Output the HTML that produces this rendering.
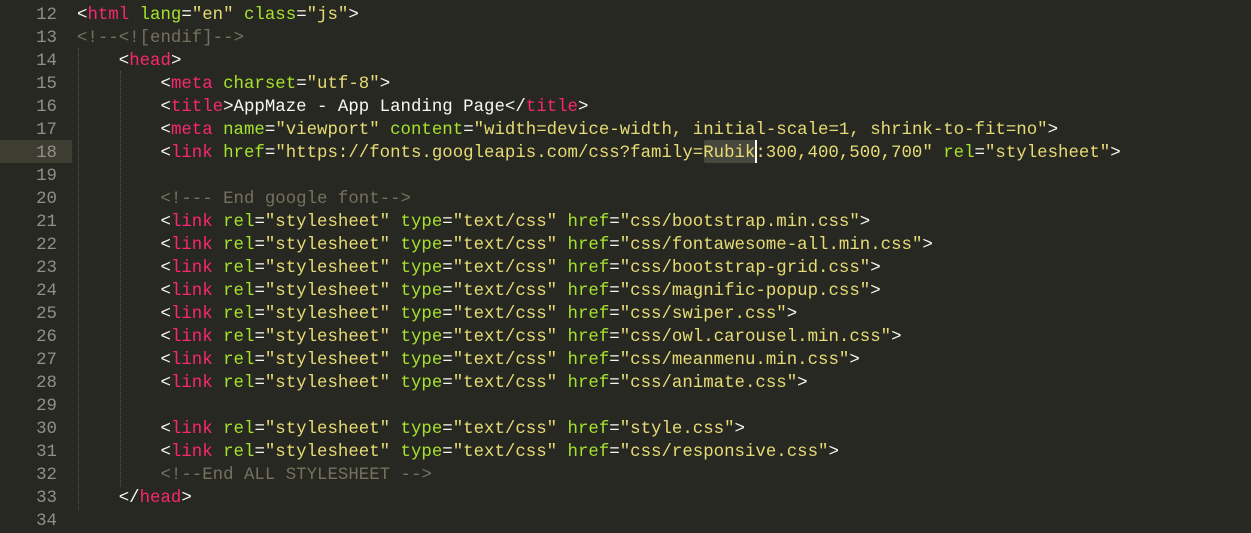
<!DOCTYPE html>
<html><head><style>
body{margin:0;background:#272822;width:1251px;height:525px;overflow:hidden;position:relative;font-family:"Liberation Mono",monospace;font-size:17.4px;color:#F8F8F2}
.r{position:absolute;left:0;height:23px;line-height:23px;white-space:pre;width:1251px;padding-top:2px}
.n{position:absolute;left:0;width:57px;text-align:right;color:#8F908A}
.c{position:absolute;left:77px}
.t{color:#F92672}.a{color:#A6E22E}.s{color:#E6DB74}.m{color:#75715E}
.hl{position:absolute;left:0;top:140px;width:72px;height:23px;background:#3E3D32}
.g{position:absolute;width:0;border-left:1px dotted #555449}
.sel{position:absolute;left:704px;top:140px;width:52px;height:23px;background:#49483E;border-radius:2px}
.cur{position:absolute;left:755px;top:140px;width:2px;height:23px;background:#F8F8F0}
</style></head><body>
<div class="hl"></div>
<div class="g" style="left:78px;top:48px;height:462px"></div>
<div class="g" style="left:120px;top:71px;height:416px"></div>
<div class="sel"></div>
<div class="r" style="top:2px"><span class="n">12</span><span class="c">&lt;<span class="t">html</span> <span class="a">lang</span>=<span class="s">"en"</span> <span class="a">class</span>=<span class="s">"js"</span>&gt;</span></div>
<div class="r" style="top:25px"><span class="n">13</span><span class="c m">&lt;!--&lt;![endif]--&gt;</span></div>
<div class="r" style="top:48px"><span class="n">14</span><span class="c">    &lt;<span class="t">head</span>&gt;</span></div>
<div class="r" style="top:71px"><span class="n">15</span><span class="c">        &lt;<span class="t">meta</span> <span class="a">charset</span>=<span class="s">"utf-8"</span>&gt;</span></div>
<div class="r" style="top:94px"><span class="n">16</span><span class="c">        &lt;<span class="t">title</span>&gt;AppMaze - App Landing Page&lt;/<span class="t">title</span>&gt;</span></div>
<div class="r" style="top:117px"><span class="n">17</span><span class="c">        &lt;<span class="t">meta</span> <span class="a">name</span>=<span class="s">"viewport"</span> <span class="a">content</span>=<span class="s">"width=device-width, initial-scale=1, shrink-to-fit=no"</span>&gt;</span></div>
<div class="r" style="top:140px"><span class="n">18</span><span class="c">        &lt;<span class="t">link</span> <span class="a">href</span>=<span class="s">"https://fonts.googleapis.com/css?family=Rubik:300,400,500,700"</span> <span class="a">rel</span>=<span class="s">"stylesheet"</span>&gt;</span></div>
<div class="r" style="top:163px"><span class="n">19</span></div>
<div class="r" style="top:186px"><span class="n">20</span><span class="c m">        &lt;!--- End google font--&gt;</span></div>
<div class="r" style="top:209px"><span class="n">21</span><span class="c">        &lt;<span class="t">link</span> <span class="a">rel</span>=<span class="s">"stylesheet"</span> <span class="a">type</span>=<span class="s">"text/css"</span> <span class="a">href</span>=<span class="s">"css/bootstrap.min.css"</span>&gt;</span></div>
<div class="r" style="top:232px"><span class="n">22</span><span class="c">        &lt;<span class="t">link</span> <span class="a">rel</span>=<span class="s">"stylesheet"</span> <span class="a">type</span>=<span class="s">"text/css"</span> <span class="a">href</span>=<span class="s">"css/fontawesome-all.min.css"</span>&gt;</span></div>
<div class="r" style="top:255px"><span class="n">23</span><span class="c">        &lt;<span class="t">link</span> <span class="a">rel</span>=<span class="s">"stylesheet"</span> <span class="a">type</span>=<span class="s">"text/css"</span> <span class="a">href</span>=<span class="s">"css/bootstrap-grid.css"</span>&gt;</span></div>
<div class="r" style="top:278px"><span class="n">24</span><span class="c">        &lt;<span class="t">link</span> <span class="a">rel</span>=<span class="s">"stylesheet"</span> <span class="a">type</span>=<span class="s">"text/css"</span> <span class="a">href</span>=<span class="s">"css/magnific-popup.css"</span>&gt;</span></div>
<div class="r" style="top:301px"><span class="n">25</span><span class="c">        &lt;<span class="t">link</span> <span class="a">rel</span>=<span class="s">"stylesheet"</span> <span class="a">type</span>=<span class="s">"text/css"</span> <span class="a">href</span>=<span class="s">"css/swiper.css"</span>&gt;</span></div>
<div class="r" style="top:324px"><span class="n">26</span><span class="c">        &lt;<span class="t">link</span> <span class="a">rel</span>=<span class="s">"stylesheet"</span> <span class="a">type</span>=<span class="s">"text/css"</span> <span class="a">href</span>=<span class="s">"css/owl.carousel.min.css"</span>&gt;</span></div>
<div class="r" style="top:347px"><span class="n">27</span><span class="c">        &lt;<span class="t">link</span> <span class="a">rel</span>=<span class="s">"stylesheet"</span> <span class="a">type</span>=<span class="s">"text/css"</span> <span class="a">href</span>=<span class="s">"css/meanmenu.min.css"</span>&gt;</span></div>
<div class="r" style="top:370px"><span class="n">28</span><span class="c">        &lt;<span class="t">link</span> <span class="a">rel</span>=<span class="s">"stylesheet"</span> <span class="a">type</span>=<span class="s">"text/css"</span> <span class="a">href</span>=<span class="s">"css/animate.css"</span>&gt;</span></div>
<div class="r" style="top:393px"><span class="n">29</span></div>
<div class="r" style="top:416px"><span class="n">30</span><span class="c">        &lt;<span class="t">link</span> <span class="a">rel</span>=<span class="s">"stylesheet"</span> <span class="a">type</span>=<span class="s">"text/css"</span> <span class="a">href</span>=<span class="s">"style.css"</span>&gt;</span></div>
<div class="r" style="top:439px"><span class="n">31</span><span class="c">        &lt;<span class="t">link</span> <span class="a">rel</span>=<span class="s">"stylesheet"</span> <span class="a">type</span>=<span class="s">"text/css"</span> <span class="a">href</span>=<span class="s">"css/responsive.css"</span>&gt;</span></div>
<div class="r" style="top:462px"><span class="n">32</span><span class="c m">        &lt;!--End ALL STYLESHEET --&gt;</span></div>
<div class="r" style="top:485px"><span class="n">33</span><span class="c">    &lt;/<span class="t">head</span>&gt;</span></div>
<div class="r" style="top:508px"><span class="n">34</span></div>
<div class="cur"></div>
</body></html>
